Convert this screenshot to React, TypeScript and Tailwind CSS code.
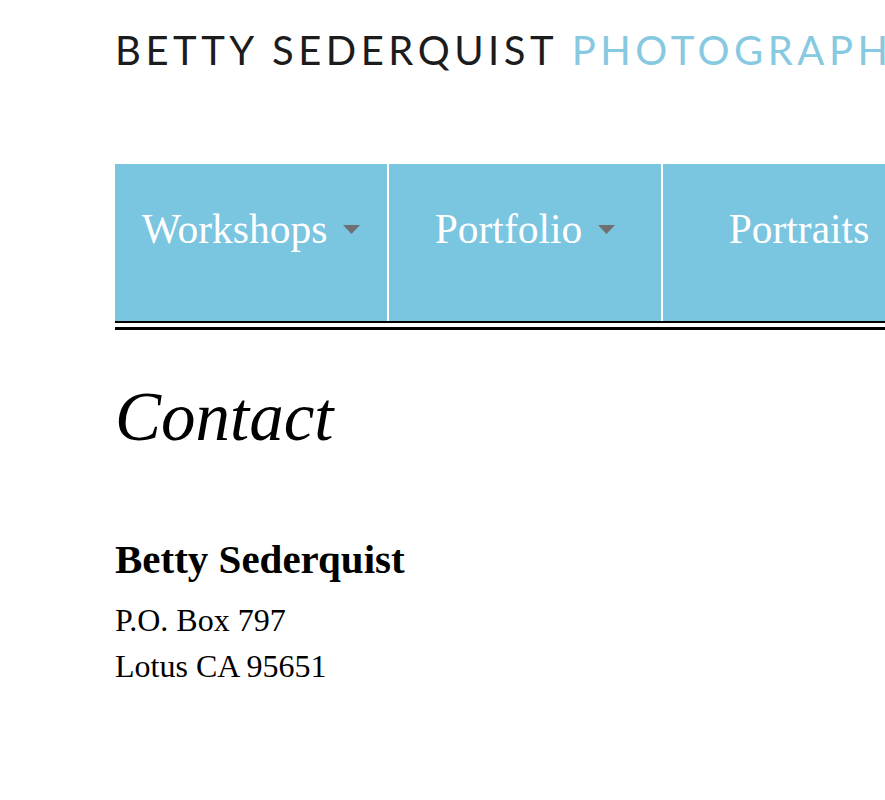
const navItems = [
  { label: "Workshops", caret: true },
  { label: "Portfolio", caret: true },
  { label: "Portraits", caret: false },
];

function Caret() {
  return (
    <svg width="17" height="9" viewBox="0 0 17 9" className="ml-4 flex-none">
      <path d="M0 0 H17 L8.5 9 Z" fill="#707070" />
    </svg>
  );
}

export default function App() {
  return (
    <div className="w-full min-h-[800px] overflow-hidden bg-white">
      <div className="w-[1200px] pl-[115px]">
        <div
          className="pt-[30px] text-[40px] leading-[40px] font-normal tracking-[0.113em] whitespace-nowrap"
          style={{ fontFamily: "Lato, 'Open Sans', sans-serif" }}
        >
          <span className="text-[#1c1c1c]">BETTY SEDERQUIST</span>{" "}
          <span className="text-[#86c9e1]">PHOTOGRAPHY</span>
        </div>

        <nav className="mt-[94px] font-['Liberation_Serif',serif]">
          <ul className="flex h-[157px] bg-[#7ac5df]">
            {navItems.map((item, i) => (
              <li
                key={item.label}
                className={`flex justify-center pt-[42px] ${
                  i > 0 ? "w-[274px] border-l-2 border-white" : "w-[272px]"
                }`}
              >
                <div className="flex items-center h-[46px] text-[41.5px] leading-[46px] text-white">
                  {item.label}
                  {item.caret ? <Caret /> : null}
                </div>
              </li>
            ))}
          </ul>
          <div className="h-[2px] bg-black" />
          <div className="h-[4px] bg-white" />
          <div className="h-[3px] bg-black" />
        </nav>

        <main className="font-['Liberation_Serif',serif] text-black">
          <h1 className="mt-[53px] text-[69px] leading-[68px] italic">Contact</h1>
          <h2 className="mt-[88px] text-[41px] leading-[40px] font-bold">
            Betty Sederquist
          </h2>
          <div className="mt-[18px] text-[32px] leading-[46px]">
            <p>P.O. Box 797</p>
            <p>Lotus CA 95651</p>
          </div>
        </main>
      </div>
    </div>
  );
}
